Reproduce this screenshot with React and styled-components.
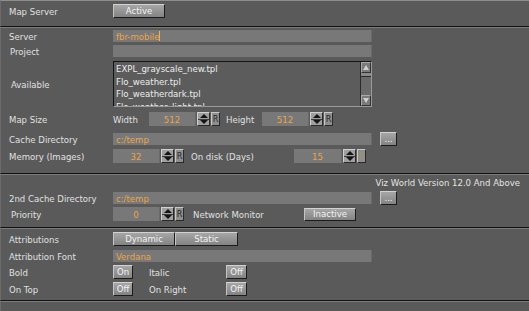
import React from 'react';
import styled, { createGlobalStyle } from 'styled-components';

const Global = createGlobalStyle`
  html, body { margin: 0; padding: 0; background: #5a5a5a; overflow: hidden; }
  body {
    font-family: "DejaVu Sans Condensed", "DejaVu Sans", sans-serif;
    font-stretch: condensed;
    font-size: 9.5px;
    color: #e2e2e2;
  }
  * { box-sizing: border-box; }
`;

const Page = styled.div`
  width: 529px;
  height: 311px;
  background: #5a5a5a;
  border-top: 1px solid #8e8e8e;
  display: flex;
  flex-direction: column;
`;

const Panel = styled.section`
  display: flex;
  flex-direction: column;
  border-top: 1px solid ${p => (p.$first ? 'transparent' : '#7c7c7c')};
  border-bottom: 1px solid #111;
  border-left: 1px solid #6c6c6c;
  margin-top: ${p => (p.$first ? '-1px' : '0')};
  height: ${p => p.$h}px;
  padding: ${p => p.$pt}px 0 0 8px;
`;

const Filler = styled.div`
  flex: 1;
  border-top: 1px solid #7c7c7c;
  border-left: 1px solid #6c6c6c;
`;

const Row = styled.div`
  display: flex;
  align-items: center;
  height: ${p => p.$h}px;
  margin-top: ${p => p.$mt || 0}px;
  white-space: nowrap;
`;

const Label = styled.div`
  width: ${p => p.$w || 104}px;
  padding-left: ${p => p.$indent || 0}px;
  flex-shrink: 0;
  color: #e0e0e0;
`;

const Input = styled.div`
  width: ${p => p.$w}px;
  height: ${p => p.$h || 12}px;
  background: #787878;
  color: #eba448;
  display: flex;
  align-items: center;
  justify-content: ${p => (p.$center ? 'center' : 'flex-start')};
  padding-left: ${p => (p.$center ? 0 : 3)}px;
  border-right: 1px solid #6a6a6a;
  flex-shrink: 0;
`;

const Caret = styled.span`
  display: inline-block;
  width: 1px;
  height: 10px;
  background: #f0b050;
`;

const Button = styled.div`
  width: ${p => p.$w}px;
  height: ${p => p.$h || 14}px;
  margin-left: ${p => p.$ml || 0}px;
  flex-shrink: 0;
  display: flex;
  align-items: center;
  justify-content: center;
  color: #f2f2f2;
  background: linear-gradient(#a6a6a6, #838383);
  border-top: 1px solid #d2d2d2;
  border-left: 1px solid #c4c4c4;
  border-bottom: 1px solid #1c1c1c;
  border-right: 1px solid #1c1c1c;
  line-height: 1;
`;

const Spin = styled.div`
  width: 13px;
  height: 14px;
  margin-left: 1px;
  display: flex;
  flex-direction: column;
  background: #a0a0a0;
  border: 1px solid #2a2a2a;
  border-top-color: #d0d0d0;
  border-left-color: #d0d0d0;
  flex-shrink: 0;
`;

const SpinHalf = styled.div`
  flex: 1;
  display: flex;
  align-items: center;
  justify-content: center;
  border-top: ${p => (p.$down ? '1px solid #3a3a3a' : 'none')};
`;

const Tri = styled.div`
  width: 0;
  height: 0;
  border-left: 4px solid transparent;
  border-right: 4px solid transparent;
  ${p => (p.$down ? 'border-top: 4px solid #151515;' : 'border-bottom: 4px solid #151515;')}
`;

const RBtn = styled.div`
  width: 9px;
  height: 14px;
  margin-left: 1px;
  background: #8e8e8e;
  border: 1px solid #2a2a2a;
  border-top-color: #c8c8c8;
  border-left-color: #c8c8c8;
  color: ${p => (p.$hl ? '#9c9660' : '#262626')};
  font-family: "DejaVu Sans", sans-serif;
  font-size: 9px;
  line-height: 1;
  display: flex;
  align-items: center;
  justify-content: center;
  overflow: visible;
  flex-shrink: 0;
`;

const Gap = styled.div`
  width: ${p => p.$w}px;
  flex-shrink: 0;
`;

const Note = styled.div`
  margin-left: auto;
  margin-right: 9px;
  color: #e4e4e4;
`;

const List = styled.div`
  width: 259px;
  height: 46px;
  background: #5c5c5c;
  border-top: 1px solid #141414;
  border-left: 1px solid #141414;
  border-bottom: 1px solid #9a9a9a;
  border-right: 1px solid #9a9a9a;
  overflow: hidden;
  display: flex;
`;

const Items = styled.div`
  flex: 1;
  padding: 1px 0 0 2px;
  line-height: 12.5px;
  color: #ececec;
`;

const Scroll = styled.div`
  width: 11px;
  display: flex;
  flex-direction: column;
  background: #6a6a6a;
  border-left: 1px solid #2a2a2a;
`;

const ScrollBtn = styled.div`
  height: 11px;
  display: flex;
  align-items: center;
  justify-content: center;
  background: #7a7a7a;
  border: 1px solid #a8a8a8;
  border-right-color: #333;
  border-bottom-color: #333;
`;

const Thumb = styled.div`
  height: 4px;
  background: #8a8a8a;
  border-bottom: 1px solid #2a2a2a;
`;

const Track = styled.div`
  flex: 1;
`;

const HollowTri = styled.div`
  width: 0;
  height: 0;
  border-left: 3px solid transparent;
  border-right: 3px solid transparent;
  ${p => (p.$down ? 'border-top: 5px solid #cfcfcf;' : 'border-bottom: 5px solid #cfcfcf;')}
`;

function Spinner({ value, w = 47, hl }) {
  return (
    <>
      <Input $w={w} $h={14} $center>{value}</Input>
      <Spin>
        <SpinHalf><Tri /></SpinHalf>
        <SpinHalf $down><Tri $down /></SpinHalf>
      </Spin>
      <RBtn $hl={hl}>R</RBtn>
    </>
  );
}

export default function App() {
  return (
    <>
      <Global />
      <Page>
        <Panel $first $h={27} $pt={3}>
          <Row $h={14}>
            <Label>Map Server</Label>
            <Button $w={52}>Active</Button>
          </Row>
        </Panel>

        <Panel $h={147} $pt={2}>
          <Row $h={12}>
            <Label>Server</Label>
            <Input $w={259}>fbr-mobile<Caret /></Input>
          </Row>
          <Row $h={12} $mt={3}>
            <Label $indent={1}>Project</Label>
            <Input $w={259} />
          </Row>
          <Row $h={46} $mt={4}>
            <Label $indent={2}>Available</Label>
            <List>
              <Items>
                <div>EXPL_grayscale_new.tpl</div>
                <div>Flo_weather.tpl</div>
                <div>Flo_weatherdark.tpl</div>
                <div>Flo_weather_light.tpl</div>
              </Items>
              <Scroll>
                <ScrollBtn><HollowTri /></ScrollBtn>
                <Thumb />
                <Track />
                <ScrollBtn><HollowTri $down /></ScrollBtn>
              </Scroll>
            </List>
          </Row>
          <Row $h={14} $mt={5}>
            <Label>Map Size</Label>
            <Label $w={36}>Width</Label>
            <Spinner value="512" />
            <Gap $w={6} />
            <Label $w={36}>Height</Label>
            <Spinner value="512" />
          </Row>
          <Row $h={14} $mt={6}>
            <Label>Cache Directory</Label>
            <Input $w={259}>c:/temp</Input>
            <Button $w={17} $ml={8}>...</Button>
          </Row>
          <Row $h={14} $mt={3}>
            <Label>Memory (Images)</Label>
            <Spinner value="32" />
            <Gap $w={7} />
            <Label $w={103}>On disk (Days)</Label>
            <Spinner value="15" w={48} hl />
          </Row>
        </Panel>

        <Panel $h={54} $pt={1}>
          <Row $h={13}>
            <Note>Viz World Version 12.0 And Above</Note>
          </Row>
          <Row $h={14} $mt={2}>
            <Label>2nd Cache Directory</Label>
            <Input $w={259}>c:/temp</Input>
            <Button $w={17} $ml={8}>...</Button>
          </Row>
          <Row $h={14} $mt={2}>
            <Label $indent={2}>Priority</Label>
            <Spinner value="0" />
            <Gap $w={9} />
            <Label $w={111}>Network Monitor</Label>
            <Button $w={52} $h={13}>Inactive</Button>
          </Row>
        </Panel>

        <Panel $h={73} $pt={3}>
          <Row $h={14}>
            <Label>Attributions</Label>
            <Button $w={62}>Dynamic</Button>
            <Button $w={63}>Static</Button>
          </Row>
          <Row $h={12} $mt={4}>
            <Label>Attribution Font</Label>
            <Input $w={259}>Verdana</Input>
          </Row>
          <Row $h={14} $mt={3}>
            <Label>Bold</Label>
            <Button $w={20}>On</Button>
            <Gap $w={16} />
            <Label $w={77}>Italic</Label>
            <Button $w={21}>Off</Button>
          </Row>
          <Row $h={14} $mt={3}>
            <Label>On Top</Label>
            <Button $w={20}>Off</Button>
            <Gap $w={16} />
            <Label $w={77}>On Right</Label>
            <Button $w={21}>Off</Button>
          </Row>
        </Panel>
        <Filler />
      </Page>
    </>
  );
}
